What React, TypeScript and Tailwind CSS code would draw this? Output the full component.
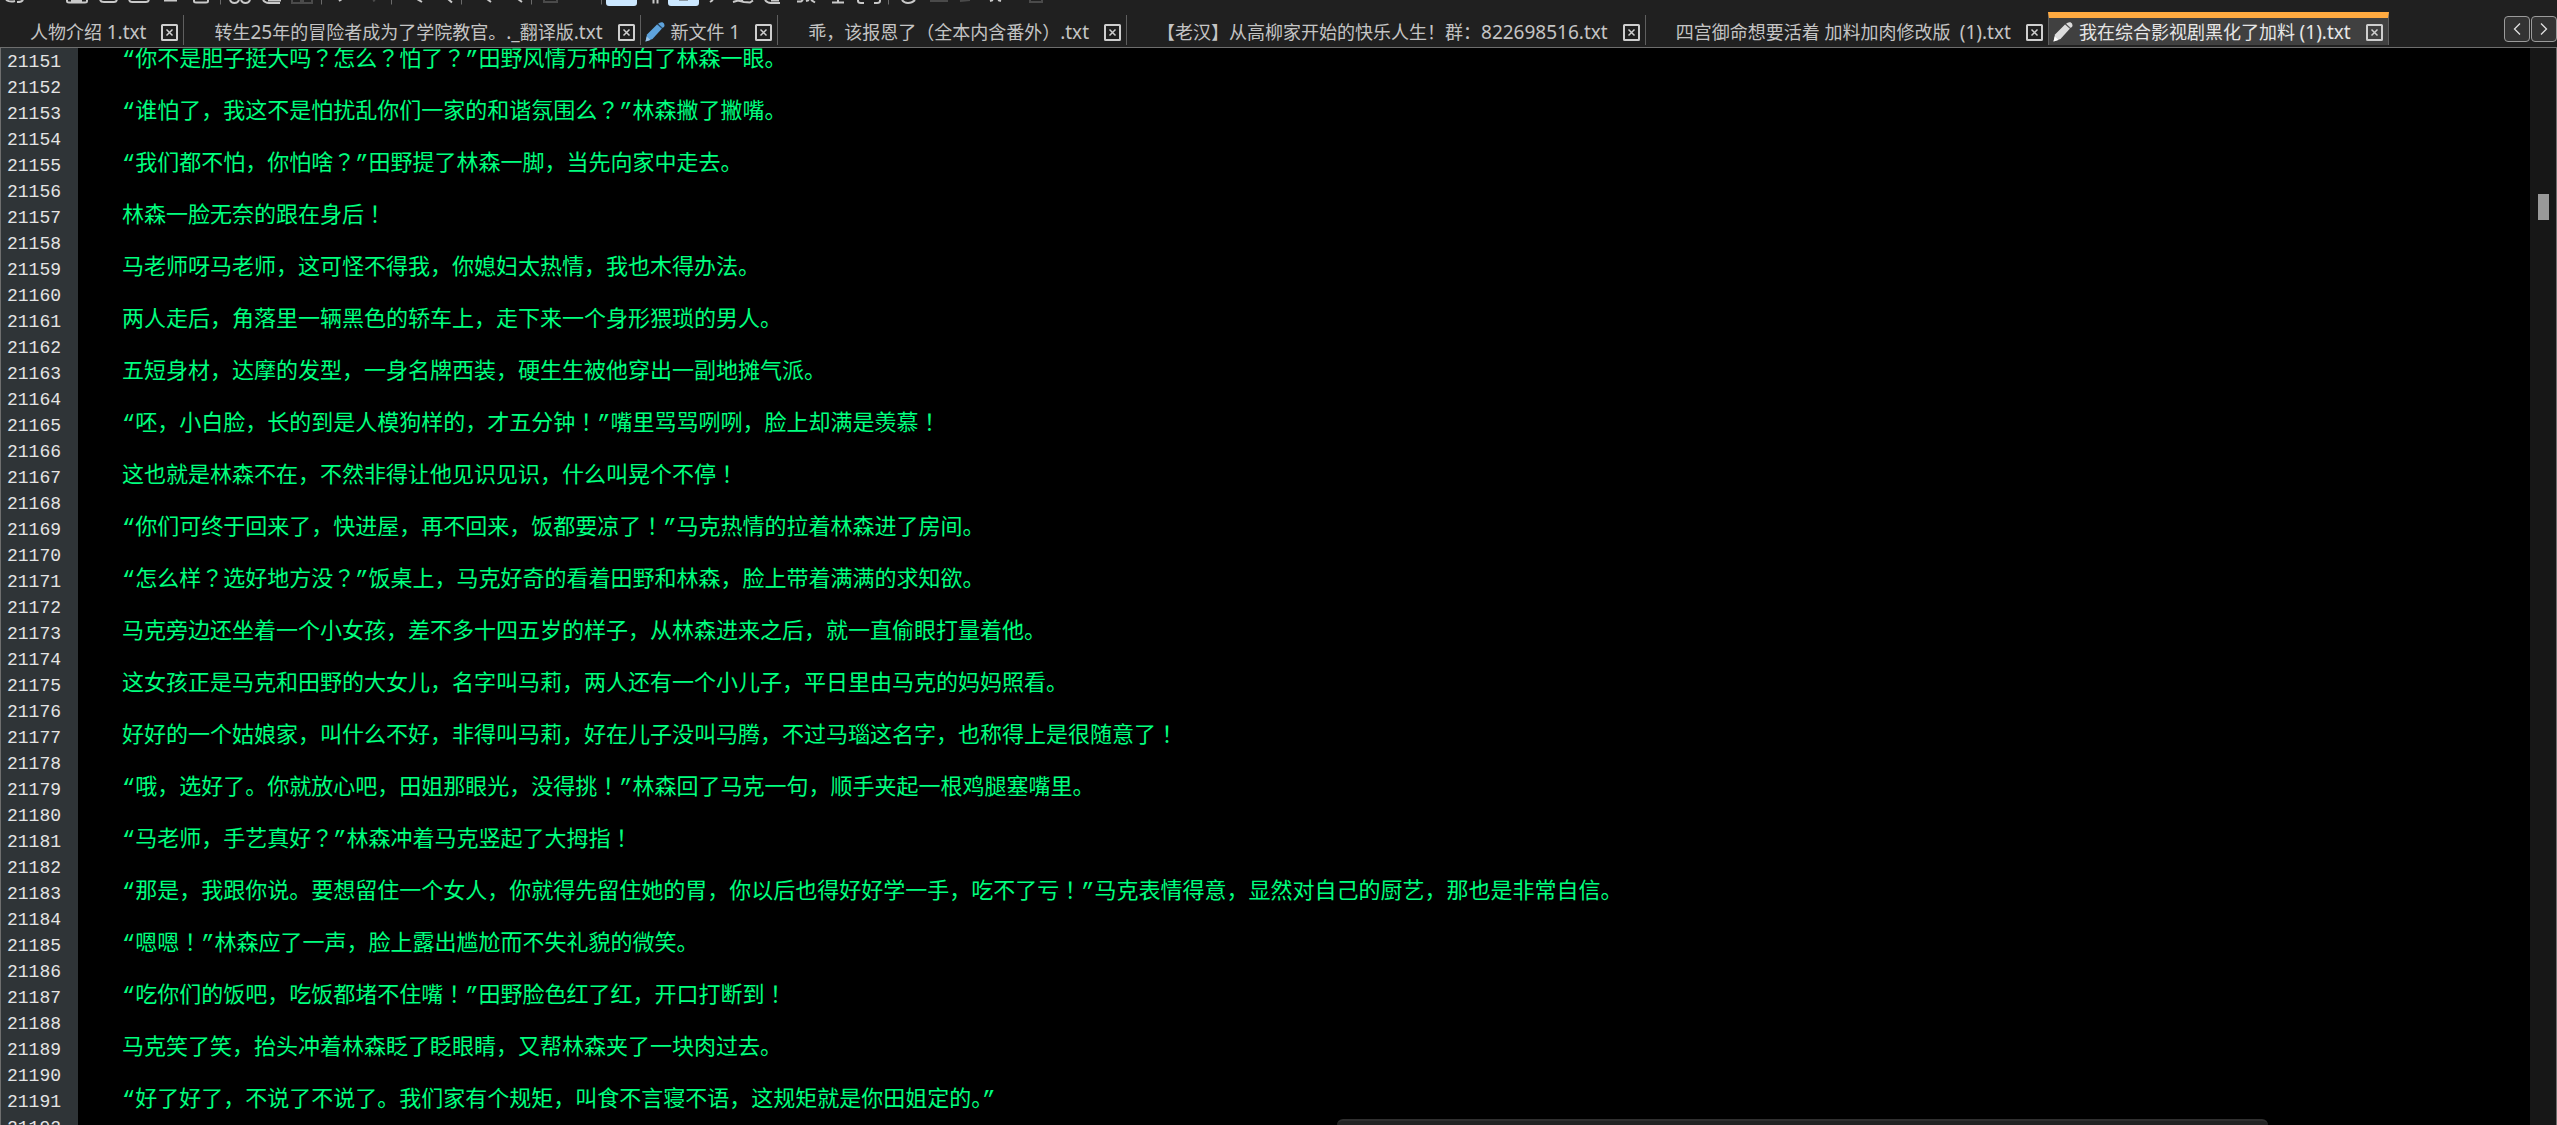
import React, { useState } from 'react'

type Tab = {
  id: number
  title: string
  pencil?: 'blue' | 'white'
}

const TABS: Tab[] = [
  { id: 1, title: '人物介绍 1.txt' },
  { id: 2, title: '转生25年的冒险者成为了学院教官。._翻译版.txt' },
  { id: 3, title: '新文件 1', pencil: 'blue' },
  { id: 4, title: '乖，该报恩了（全本内含番外）.txt' },
  { id: 5, title: '【老汉】从高柳家开始的快乐人生！群：822698516.txt' },
  { id: 6, title: '四宫御命想要活着 加料加肉修改版  (1).txt' },
  { id: 7, title: '我在综合影视剧黑化了加料 (1).txt', pencil: 'white' },
]

const FIRST_LINE = 21151

// every paragraph is followed by an empty line
const PARAGRAPHS = [
  '“你不是胆子挺大吗？怎么？怕了？”田野风情万种的白了林森一眼。',
  '“谁怕了，我这不是怕扰乱你们一家的和谐氛围么？”林森撇了撇嘴。',
  '“我们都不怕，你怕啥？”田野提了林森一脚，当先向家中走去。',
  '林森一脸无奈的跟在身后！',
  '马老师呀马老师，这可怪不得我，你媳妇太热情，我也木得办法。',
  '两人走后，角落里一辆黑色的轿车上，走下来一个身形猥琐的男人。',
  '五短身材，达摩的发型，一身名牌西装，硬生生被他穿出一副地摊气派。',
  '“呸，小白脸，长的到是人模狗样的，才五分钟！”嘴里骂骂咧咧，脸上却满是羡慕！',
  '这也就是林森不在，不然非得让他见识见识，什么叫晃个不停！',
  '“你们可终于回来了，快进屋，再不回来，饭都要凉了！”马克热情的拉着林森进了房间。',
  '“怎么样？选好地方没？”饭桌上，马克好奇的看着田野和林森，脸上带着满满的求知欲。',
  '马克旁边还坐着一个小女孩，差不多十四五岁的样子，从林森进来之后，就一直偷眼打量着他。',
  '这女孩正是马克和田野的大女儿，名字叫马莉，两人还有一个小儿子，平日里由马克的妈妈照看。',
  '好好的一个姑娘家，叫什么不好，非得叫马莉，好在儿子没叫马腾，不过马瑙这名字，也称得上是很随意了！',
  '“哦，选好了。你就放心吧，田姐那眼光，没得挑！”林森回了马克一句，顺手夹起一根鸡腿塞嘴里。',
  '“马老师，手艺真好？”林森冲着马克竖起了大拇指！',
  '“那是，我跟你说。要想留住一个女人，你就得先留住她的胃，你以后也得好好学一手，吃不了亏！”马克表情得意，显然对自己的厨艺，那也是非常自信。',
  '“嗯嗯！”林森应了一声，脸上露出尴尬而不失礼貌的微笑。',
  '“吃你们的饭吧，吃饭都堵不住嘴！”田野脸色红了红，开口打断到！',
  '马克笑了笑，抬头冲着林森眨了眨眼睛，又帮林森夹了一块肉过去。',
  '“好了好了，不说了不说了。我们家有个规矩，叫食不言寝不语，这规矩就是你田姐定的。”',
]

const LINES = PARAGRAPHS.flatMap((text) => [text, ''])

function Toolbar() {
  return (
    <svg width="1100" height="7" viewBox="0 0 1100 7" fill="none" aria-hidden="true" className="block shrink-0">
      <path d="M220.500 0V4.500M321.500 0V4.500M391.500 0V4.500M461.500 0V4.500M531.500 0V4.500M601.500 0V4.500M888.500 0V4.500" stroke="#6b6b6b" />
      <g stroke="#c9c9c9" strokeWidth="2">
        <path d="M6 0Q10 2.500 15 1M17 2Q22 2 23 0" />
        <path d="M67 0V1Q67 2.500 69 2.500H85Q87 2.500 87 1V0M71 0.500H82" />
        <path d="M100 0Q101 2 104 2H114Q116 2 117 0" />
        <path d="M129 0Q130 2 132 2H146Q148 2 149 0M164 0.500H177M194 0V1Q194 2.500 196 2.500H206Q208 2.500 208 1V0" />
        <path d="M230 0Q231 3 234.500 3Q238 3 239 0M241 0Q242 3 245.500 3Q249 3 250 0" />
        <path d="M263 0Q265 3 269 3H280M268 0.500H281" />
        <path d="M339 1L342 -1M417 -1L422 2M448 -1L452 2.500M487 -1L491 2M518 -1L522 2" />
        <path d="M653.500 0V3.500M657.500 0V3.500" />
        <path d="M710 2L713 0M733 2L738 0.500L744 2L750 2.500L753 0.500M742 0V2" />
        <path d="M765 0Q767 3 771 3H780M771 0.500H779" />
        <path d="M797 1.500H801L803 0M806 1L809 0M811 0L815 2.500M832 2.500H844M838 0V3" />
        <path d="M858 0V1Q858 3 861 3H864M880 0V1Q880 3 877 3H874" />
        <path d="M902 0Q904 3 908 3Q912 3 915 0M990 1L993 0M998 0L1001 1" />
      </g>
      <g stroke="#4a4a4a" strokeWidth="2">
        <path d="M292 0V3H301V0M303 0V3H312V0M373 1L375 0M544 0V2H557V0M930 1H948M960 1L970 0M1030 0V2H1042V0" />
      </g>
      <path d="M606 0H637V3Q637 6 634 6H609Q606 6 606 3ZM668 0H699V3Q699 6 696 6H671Q668 6 668 3Z" fill="#cce8ff" />
      <path d="M679 0.500H688" stroke="#8b98a3" />
    </svg>
  )
}

function PencilIcon({ color }: { color: 'blue' | 'white' }) {
  const body = color === 'blue' ? '#5ea3dc' : '#dcdcdc'
  const tip = color === 'blue' ? '#9cc4e6' : '#ffffff'
  return (
    <svg width="20" height="20" viewBox="0 0 20 20" fill="none" aria-hidden="true">
      <path d="M0.500 19.500L2 12.500L12 2.500L17 6.500L7.500 17Z" fill={body} />
      <path d="M13 1.800Q15 -0.200 17.500 0.300Q20.300 2 19.200 4.500L17.800 6L13 1.800Z" fill={body} />
      <path d="M0.500 19.500L1.800 14.500L5.500 18Z" fill={tip} />
      <path d="M12.500 2.500L17.200 6.500" stroke={color === 'blue' ? '#2f6da3' : '#777777'} />
    </svg>
  )
}

function CloseIcon() {
  return (
    <svg width="17" height="17" viewBox="0 0 17 17" fill="none" aria-hidden="true">
      <rect x="1" y="1" width="15" height="15" rx="0.500" stroke="#cfcfcf" strokeWidth="2" />
      <path d="M5.500 5.500L11.500 11.500M11.500 5.500L5.500 11.500" stroke="#cfcfcf" strokeWidth="1.500" />
    </svg>
  )
}

// latin runs of a title are set one step larger than the hanzi
function TabTitle({ title }: { title: string }) {
  return (
    <span className="whitespace-pre text-[18px] leading-[26px]">
      {title.split(/([\x21-\x7e]+)/).map((part, i) => (
        <span key={i} className={i % 2 ? 'text-[19px]' : ''}>{part}</span>
      ))}
    </span>
  )
}

// ！ and ？ sit in the middle of their cell
function CodeLine({ text }: { text: string }) {
  return (
    <div className="h-[26px] whitespace-pre">
      {text.split(/([！？])/).map((part, i) =>
        i % 2 ? (
          <span key={i} lang="zh-TW" className="font-['Liberation_Mono','Noto_Sans_CJK_TC',monospace]">{part}</span>
        ) : (
          part
        )
      )}
    </div>
  )
}

function EditorTab({ tab, active, onSelect, onClose }: {
  tab: Tab
  active: boolean
  onSelect: () => void
  onClose: () => void
}) {
  return (
    <div
      className={`flex shrink-0 items-end border-r border-[#5f5f5f] ${
        active
          ? '-ml-px h-[33px] border-l border-t-[6px] border-t-[#ffaa40] bg-[#404040] text-[#e6e6e6]'
          : 'h-[30px] text-[#c4c4c4]'
      }`}
    >
      <button type="button" onClick={onSelect} className="flex h-[26px] items-center gap-[6px] pl-1">
        <span className="flex w-5 justify-center">{tab.pencil && <PencilIcon color={tab.pencil} />}</span>
        <TabTitle title={tab.title} />
      </button>
      <button type="button" onClick={onClose} aria-label={`关闭 ${tab.title}`} className="flex h-[26px] items-center pl-[15px] pr-[5px]">
        <CloseIcon />
      </button>
    </div>
  )
}

function ScrollButton({ direction }: { direction: 'left' | 'right' }) {
  return (
    <button
      type="button"
      aria-label={direction === 'left' ? '向左滚动' : '向右滚动'}
      className="flex h-[26px] w-[26px] items-center justify-center rounded border border-[#9b9b9b] bg-[#333333]"
    >
      <svg width="8" height="12" viewBox="0 0 8 12" fill="none" stroke="#e0e0e0" strokeWidth="1.300">
        <path d={direction === 'left' ? 'M7 0.500L1.500 6L7 11.500' : 'M1 0.500L6.500 6L1 11.500'} />
      </svg>
    </button>
  )
}

function App() {
  const [tabs, setTabs] = useState(TABS)
  const [activeId, setActiveId] = useState(7)

  return (
    <div className="relative flex h-screen flex-col overflow-hidden bg-[#202020]">
      <Toolbar />

      {/* Tab bar */}
      <div className="flex h-10 shrink-0 items-end justify-between pb-[2px] font-['Noto_Sans','Noto_Sans_CJK_SC',sans-serif]">
        <div className="flex min-w-0 items-end overflow-hidden">
          {tabs.map((tab) => (
            <EditorTab
              key={tab.id}
              tab={tab}
              active={tab.id === activeId}
              onSelect={() => setActiveId(tab.id)}
              onClose={() => setTabs(tabs.filter((t) => t.id !== tab.id))}
            />
          ))}
        </div>
        <div className="flex shrink-0 gap-px pb-[3px]">
          <ScrollButton direction="left" />
          <ScrollButton direction="right" />
        </div>
      </div>

      {/* Editor */}
      <main className="flex min-h-0 flex-1 overflow-hidden border-x border-t border-[#6e6e6e] bg-black">
        <div className="w-[77px] shrink-0 bg-[#2f3437] pl-[6px] pt-px font-['Liberation_Mono',monospace] text-lg leading-[26px] text-[#e4e4e4]">
          {LINES.map((_, i) => (
            <div key={i}>{FIRST_LINE + i}</div>
          ))}
        </div>
        <div lang="zh-CN" className="min-w-0 flex-1 pl-11 font-['Liberation_Mono','Noto_Sans_CJK_SC',monospace] text-[22px] leading-[26px] text-[#00ff7f]">
          {LINES.map((line, i) => (
            <CodeLine key={i} text={line} />
          ))}
        </div>
        <div className="w-[26px] shrink-0 bg-[#171717] pl-2 pt-[146px]">
          <div className="h-[26px] w-[11px] bg-[#999999]" />
        </div>
      </main>

      <div className="absolute bottom-0 left-[52.3%] right-[11.3%] h-[6px] rounded-t-lg border-t-2 border-[#2f2f2f] bg-[#232323]" />
    </div>
  )
}

export default App
